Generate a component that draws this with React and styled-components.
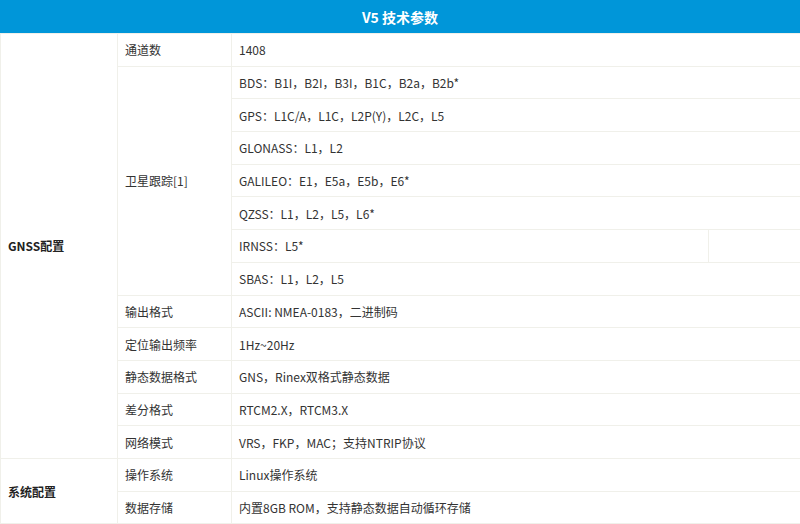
import React from 'react'
import styled, { createGlobalStyle } from 'styled-components'

const Global = createGlobalStyle`
  body {
    margin: 0;
    background: #fff;
    font-family: "Noto Sans CJK SC", "Noto Sans", sans-serif;
  }
`

const Title = styled.div`
  height: 33px;
  background: #0096d9;
  color: #fff;
  font-size: 14px;
  font-weight: bold;
  display: flex;
  align-items: center;
  justify-content: center;
`

const Table = styled.table`
  width: 800px;
  border-collapse: collapse;
  table-layout: fixed;
  font-size: 12px;
  color: #333;
`

const Tr = styled.tr`
  height: 32.7px;
`

const Td = styled.td`
  border: 1px solid #f0f0ea;
  padding: 0 0 0 7px;
  vertical-align: middle;
  font-weight: ${p => (p.$bold ? 'bold' : 'normal')};
  color: ${p => (p.$bold ? '#222' : '#333')};
`

const sats = [
  'BDS：B1I，B2I，B3I，B1C，B2a，B2b*',
  'GPS：L1C/A，L1C，L2P(Y)，L2C，L5',
  'GLONASS：L1，L2',
  'GALILEO：E1，E5a，E5b，E6*',
  'QZSS：L1，L2，L5，L6*',
  'IRNSS：L5*',
  'SBAS：L1，L2，L5',
]

const gnssRest = [
  ['输出格式', 'ASCII: NMEA-0183，二进制码'],
  ['定位输出频率', '1Hz~20Hz'],
  ['静态数据格式', 'GNS，Rinex双格式静态数据'],
  ['差分格式', 'RTCM2.X，RTCM3.X'],
  ['网络模式', 'VRS，FKP，MAC；支持NTRIP协议'],
]

export default function App() {
  return (
    <>
      <Global />
      <Title>V5 技术参数</Title>
      <Table>
        <colgroup>
          <col style={{ width: 117 }} />
          <col style={{ width: 114 }} />
          <col style={{ width: 477 }} />
          <col style={{ width: 92 }} />
        </colgroup>
        <tbody>
          <Tr>
            <Td $bold rowSpan={13}>GNSS配置</Td>
            <Td>通道数</Td>
            <Td colSpan={2}>1408</Td>
          </Tr>
          {sats.map((s, i) => (
            <Tr key={s}>
              {i === 0 && <Td rowSpan={7}>卫星跟踪[1]</Td>}
              {s.startsWith('IRNSS') ? (
                <>
                  <Td>{s}</Td>
                  <Td />
                </>
              ) : (
                <Td colSpan={2}>{s}</Td>
              )}
            </Tr>
          ))}
          {gnssRest.map(([k, v]) => (
            <Tr key={k}>
              <Td>{k}</Td>
              <Td colSpan={2}>{v}</Td>
            </Tr>
          ))}
          <Tr>
            <Td $bold rowSpan={2}>系统配置</Td>
            <Td>操作系统</Td>
            <Td colSpan={2}>Linux操作系统</Td>
          </Tr>
          <Tr>
            <Td>数据存储</Td>
            <Td colSpan={2}>内置8GB ROM，支持静态数据自动循环存储</Td>
          </Tr>
        </tbody>
      </Table>
    </>
  )
}
